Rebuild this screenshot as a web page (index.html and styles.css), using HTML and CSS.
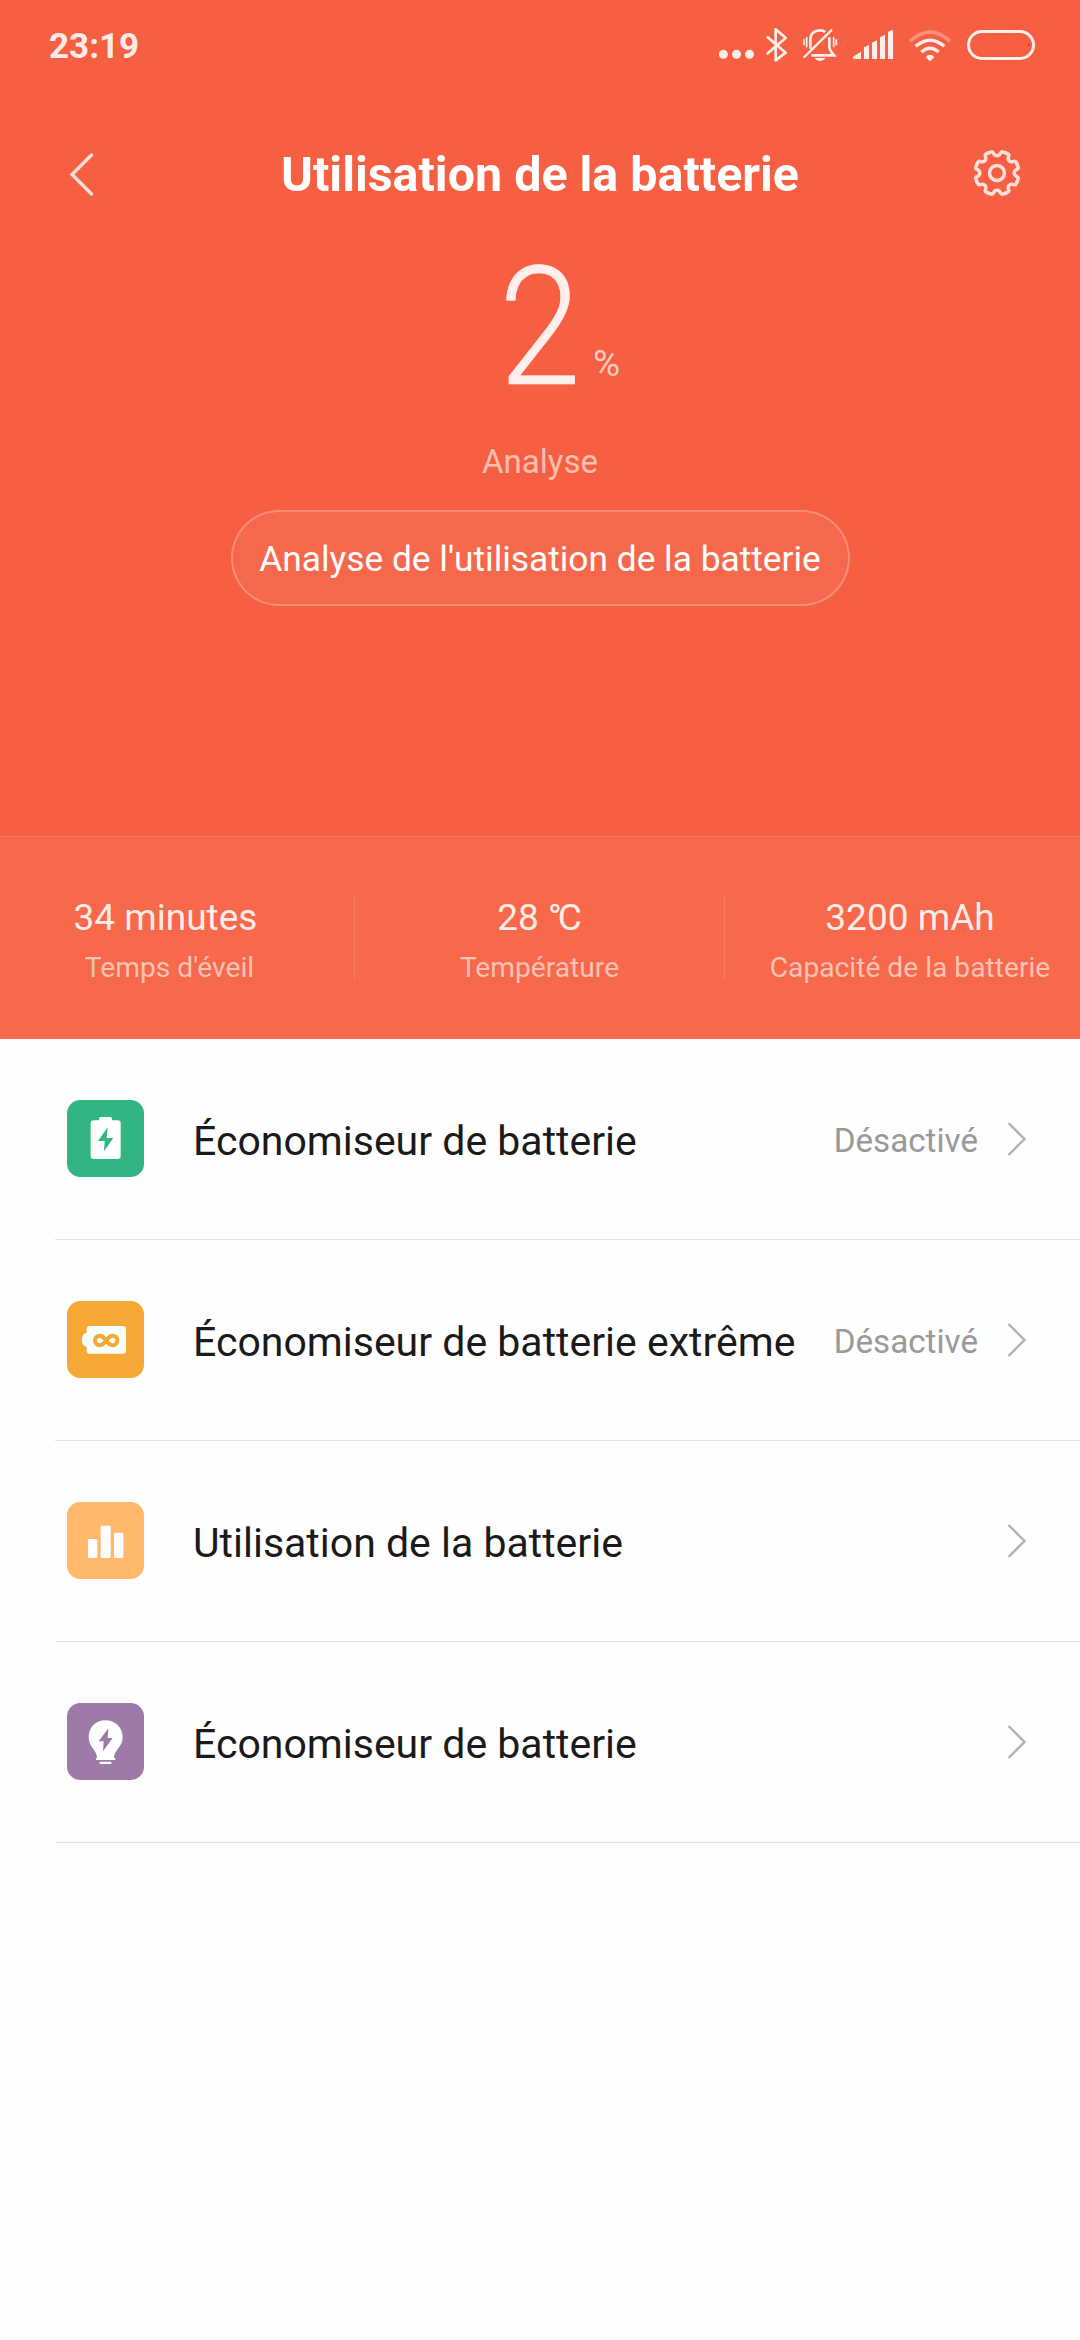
FILE: index.html
```html
<!DOCTYPE html>
<html lang="fr">
<head>
<meta charset="utf-8">
<title>Utilisation de la batterie</title>
<link rel="stylesheet" href="styles.css">
</head>
<body>
<main class="screen">
  <header class="hero">
    <div class="statusbar">
      <span class="clock">23:19</span>
      <div class="status-icons">
        <svg width="43" height="70" viewBox="51 0 129 210"><circle cx="70" cy="133" r="13.5"/><circle cx="109.500" cy="133" r="13.500"/><circle cx="148.500" cy="133" r="13.500"/></svg>
        <svg class="line" width="35" height="70" viewBox="180 0 105 210"><path d="M203 82L257 128L227 151V58L257 84L203 130" stroke-width="8" stroke-linejoin="round" stroke-linecap="round"/></svg>
        <svg class="line" width="50" height="70" viewBox="285 0 150 210"><path d="M331 116V89C331 71 343 61 360 61C366 61 372 63 376 66M388 82V110C388 120 394 126 402 136H334" stroke-width="8"/><path d="M313 141L394 61" stroke-width="7" stroke-linecap="round"/><path d="M312 88V106M320 81V112M401 81V112M409 88V106" stroke-width="5"/><path class="solid" d="M344 144H377Q371 153 361 153Q350 153 344 144Z"/></svg>
        <svg width="57" height="70" viewBox="435 0 171 210"><path d="M459 147V140L483 125V147ZM492 147V112L507 105V147ZM516 147V98L531 91V147ZM540 147V82L555 74V147ZM564 147V68Q566 62 579 60V147Z"/></svg>
        <svg class="line" width="56" height="70" viewBox="606 0 168 210"><path d="M630 94Q690 39 750 94" stroke-width="11" opacity=".35"/><path d="M647 109Q690 72 733 109M664 126Q690 103 716 126" stroke-width="10"/><path class="solid" d="M677 141Q690 128 703 141L694 151Q690 154 686 151Z"/></svg>
        <svg class="line" width="82" height="70" viewBox="774 0 246 210"><rect x="805.500" y="64.500" width="195" height="81" rx="40.500" stroke-width="9"/><path d="M986 101V108" stroke="#e00" stroke-width="3"/></svg>
      </div>
    </div>
    <nav class="titlebar">
      <svg class="back" width="52" height="48" viewBox="0 0 52 48"><path d="M24.500 5L5 24.500L24.500 44"/></svg>
      <h1 class="title">Utilisation de la batterie</h1>
      <svg class="gear" width="52" height="52" viewBox="-26 -26 52 52"><defs><path id="tooth" d="M-8.600 -20.200L-5.500 -21.200Q-4.200 -21.600 -3.300 -19.500Q-2.200 -17.200 0 -17.200Q2.200 -17.200 3.300 -19.500Q4.200 -21.600 5.500 -21.200L8.600 -20.200"/></defs><use href="#tooth"/><use href="#tooth" transform="rotate(45)"/><use href="#tooth" transform="rotate(90)"/><use href="#tooth" transform="rotate(135)"/><use href="#tooth" transform="rotate(180)"/><use href="#tooth" transform="rotate(225)"/><use href="#tooth" transform="rotate(270)"/><use href="#tooth" transform="rotate(315)"/><circle r="7.500"/></svg>
    </nav>
    <div class="level"><span class="number">2</span><span class="percent">%</span></div>
    <p class="state">Analyse</p>
    <button class="analyse">Analyse de l'utilisation de la batterie</button>
  </header>
  <section class="stats">
    <div class="stat"><span class="value uptime">34 minutes</span><span class="label">Temps d'éveil</span></div>
    <div class="stat"><span class="value">28 <span class="degree">°</span>C</span><span class="label">Température</span></div>
    <div class="stat"><span class="value">3200 mAh</span><span class="label">Capacité de la batterie</span></div>
  </section>
  <section class="list">
    <div class="row">
      <svg class="icon" viewBox="0 0 231 231"><rect width="231" height="231" rx="40" fill="#32b583"/><path fill="#fff" d="M71 70Q71 61 80 61H96V56Q96 51 101 51H130Q135 51 135 56V61H152Q161 61 161 70V168Q161 177 152 177H80Q71 177 71 168Z"/><path fill="#32b583" d="M122 82L93 123H113L111 154L139 114H119Z"/></svg>
      <span class="name">Économiseur de batterie</span><span class="hint">Désactivé</span>
      <svg class="chevron" width="24" height="40" viewBox="0 0 24 40"><path d="M4.500 4L20.500 20L4.500 36"/></svg>
    </div>
    <div class="row">
      <svg class="icon" viewBox="0 0 231 231"><rect width="231" height="231" rx="40" fill="#f5a833"/><path fill="#f7fffd" d="M59 84Q59 75 68 75H168Q177 75 177 84V149Q177 158 168 158H68Q59 158 59 149V137H56Q45 134 45 117Q45 99 56 96H59Z"/><path fill="none" stroke="#f5a833" stroke-width="12" d="M117.500 118.500C109 108 106 104 99 104C79 104 79 133 99 133C106 133 109 129 117.500 118.500C126 108 129 104 136 104C156 104 156 133 136 133C129 133 126 129 117.500 118.500Z"/></svg>
      <span class="name">Économiseur de batterie extrême</span><span class="hint">Désactivé</span>
      <svg class="chevron" width="24" height="40" viewBox="0 0 24 40"><path d="M4.500 4L20.500 20L4.500 36"/></svg>
    </div>
    <div class="row">
      <svg class="icon" viewBox="0 0 231 231"><rect width="231" height="231" rx="40" fill="#ffb968"/><g fill="#fff"><rect x="63" y="111" width="28" height="57" rx="4"/><rect x="101" y="71" width="30" height="97" rx="4"/><rect x="141" y="92" width="28" height="76" rx="4"/></g></svg>
      <span class="name">Utilisation de la batterie</span>
      <svg class="chevron" width="24" height="40" viewBox="0 0 24 40"><path d="M4.500 4L20.500 20L4.500 36"/></svg>
    </div>
    <div class="row">
      <svg class="icon" viewBox="0 0 231 231"><rect width="231" height="231" rx="40" fill="#9e7aa9"/><path fill="#fff" d="M115 52C86 52 65 74 65 103C65 133 90 141 90 165H87V171H145V165H141C141 141 167 133 167 103C167 74 144 52 115 52ZM98 176H133V183H98Z"/><path fill="#9e7aa9" d="M124 76L95 115H110L108 145L137 105H122Z"/></svg>
      <span class="name">Économiseur de batterie</span>
      <svg class="chevron" width="24" height="40" viewBox="0 0 24 40"><path d="M4.500 4L20.500 20L4.500 36"/></svg>
    </div>
  </section>
</main>
</body>
</html>
```
FILE: styles.css
```css
* { box-sizing: border-box; }
body { margin: 0; background: #fefefe; font-family: Roboto, "Noto Sans", sans-serif; }
.screen { width: 1080px; min-height: 2340px; }
.hero { display: flex; flex-direction: column; align-items: center; height: 836px; background: #f65f41; color: #fff; }
.statusbar { display: flex; justify-content: space-between; width: 100%; height: 90px; padding: 10px 40px 0 49px; }
.clock { height: 70px; font-size: 35px; font-weight: 700; line-height: 73px; color: rgba(255,255,255,.9); }
.status-icons { display: flex; fill: #ffefec; }
.line { fill: none; stroke: #ffefec; }
.solid { fill: #ffefec; stroke: none; }
.titlebar { display: flex; align-items: center; justify-content: space-between; width: 100%; height: 167px; padding: 0 57px 0 67px; }
.title { margin: 2px 10px 0 0; font-size: 48.400px; font-weight: 700; line-height: 56px; }
.back, .gear { fill: none; stroke: #ffdfd9; stroke-linecap: round; }
.back { stroke-width: 3.400px; }
.gear { margin-bottom: 2px; stroke-width: 3.500px; }
.level { display: grid; grid-template-columns: 1fr auto 1fr; width: 100%; height: 180px; }
.number { grid-column: 2; font-size: 166px; font-weight: 300; line-height: 142px; color: #feefec; -webkit-text-stroke: .6px #feefec; transform: scaleX(.89); }
.percent { padding: 85px 0 0 7px; font-size: 37px; line-height: 44px; color: rgba(255,255,255,.7); }
.state { margin: 0; height: 73px; font-size: 33px; line-height: 50px; color: rgba(255,255,255,.6); }
.analyse { width: 619px; height: 96px; padding: 3px 0 0; border: 2px solid rgba(255,255,255,.25); border-radius: 48px; background: rgba(255,255,255,.06); color: #fff; font: 400 35.300px/89px Roboto, sans-serif; white-space: nowrap; }
.stats { display: grid; grid-template-columns: repeat(3, 370px); justify-content: center; height: 203px; padding-top: 59px; border-top: 1px solid #f77b60; background: #f7694a; overflow: hidden; }
.stat { display: flex; flex-direction: column; align-items: center; height: 83px; border-right: 1px solid rgba(255,255,255,.15); }
.stat:last-child { border-right: 0; }
.value { font-size: 37px; line-height: 43px; color: rgba(255,255,255,.9); }
.uptime { padding-right: 8px; }
.degree { letter-spacing: -4px; }
.label { padding-top: 4px; font-size: 28.200px; line-height: 50px; color: rgba(255,255,255,.6); }
.row { display: flex; align-items: center; height: 201px; margin-left: 55px; padding: 0 52px 0 12px; border-bottom: 1px solid #e2e2e2; }
.icon { width: 77px; height: 77px; margin: 0 49px 1px 0; }
.name { flex: 1; padding-top: 4px; font-size: 41px; line-height: 48px; color: #1a1a1a; white-space: nowrap; }
.hint { margin-right: 26px; padding-top: 4px; font-size: 33.200px; line-height: 40px; color: #999; }
.chevron { fill: none; stroke: #b0b0b0; stroke-width: 2.400px; }
```
